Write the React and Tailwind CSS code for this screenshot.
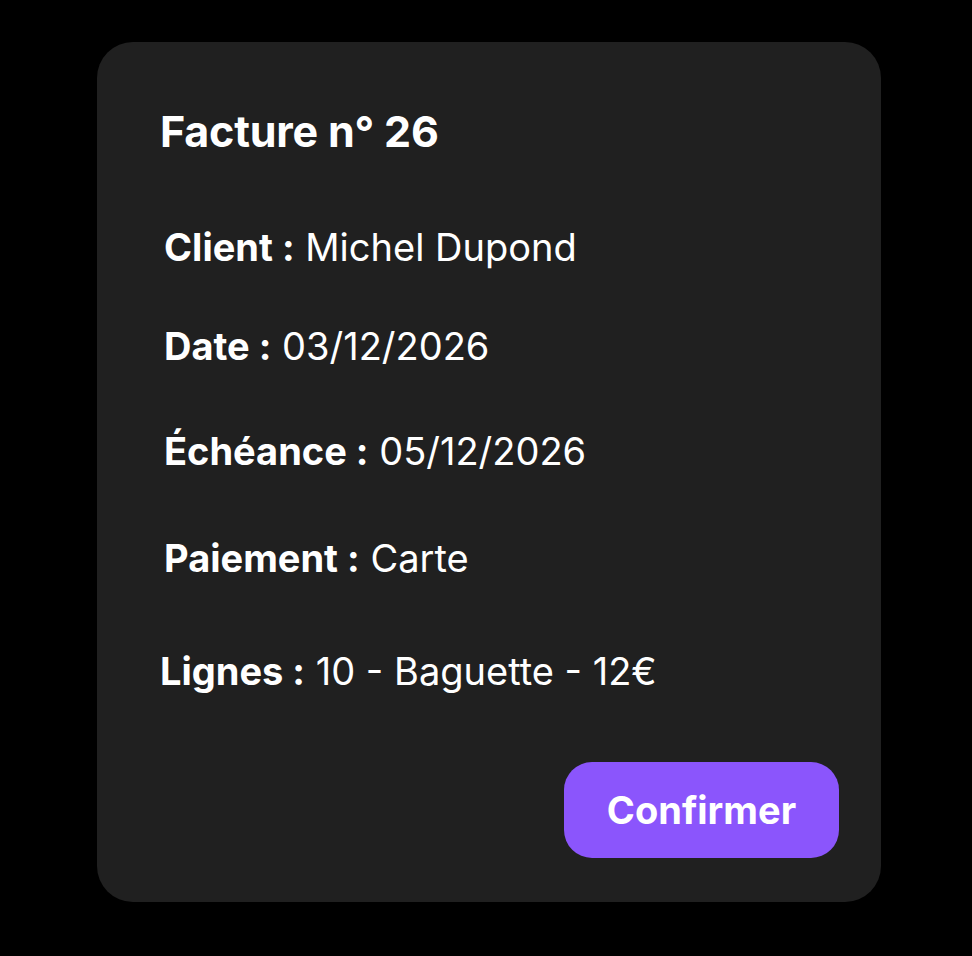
import React from 'react';

const rows = [
  { label: 'Client :', value: 'Michel Dupond', cls: 'mt-[75px] ml-1' },
  { label: 'Date :', value: '03/12/2026', cls: 'mt-[61px] ml-1' },
  { label: 'Échéance :', value: '05/12/2026', cls: 'mt-[67px] ml-1' },
  { label: 'Paiement :', value: 'Carte', cls: 'mt-[69px] ml-1' },
  { label: 'Lignes :', value: '10 - Baguette - 12€', cls: 'mt-[75px]' },
];

export default function App() {
  return (
    <div className="min-h-[956px] w-full bg-black pl-[97px] pt-[42px] font-['Inter',sans-serif] text-white">
      <div className="w-[784px] h-[860px] bg-[#202020] rounded-[36px] pl-[63px] pr-[42px] pt-[68px] flex flex-col">
        <h1 className="text-[43px] leading-none font-bold tracking-[-0.2px]">Facture n° 26</h1>

        {rows.map((r) => (
          <div key={r.label} className={`${r.cls} text-[38px] leading-none`}>
            <span className="font-bold">{r.label}</span> <span className="font-normal">{r.value}</span>
          </div>
        ))}

        <div className="mt-auto mb-[44px] flex justify-end">
          <button className="w-[275px] h-[96px] rounded-[28px] bg-[#8b55fc] text-[38px] font-bold text-white">
            Confirmer
          </button>
        </div>
      </div>
    </div>
  );
}
